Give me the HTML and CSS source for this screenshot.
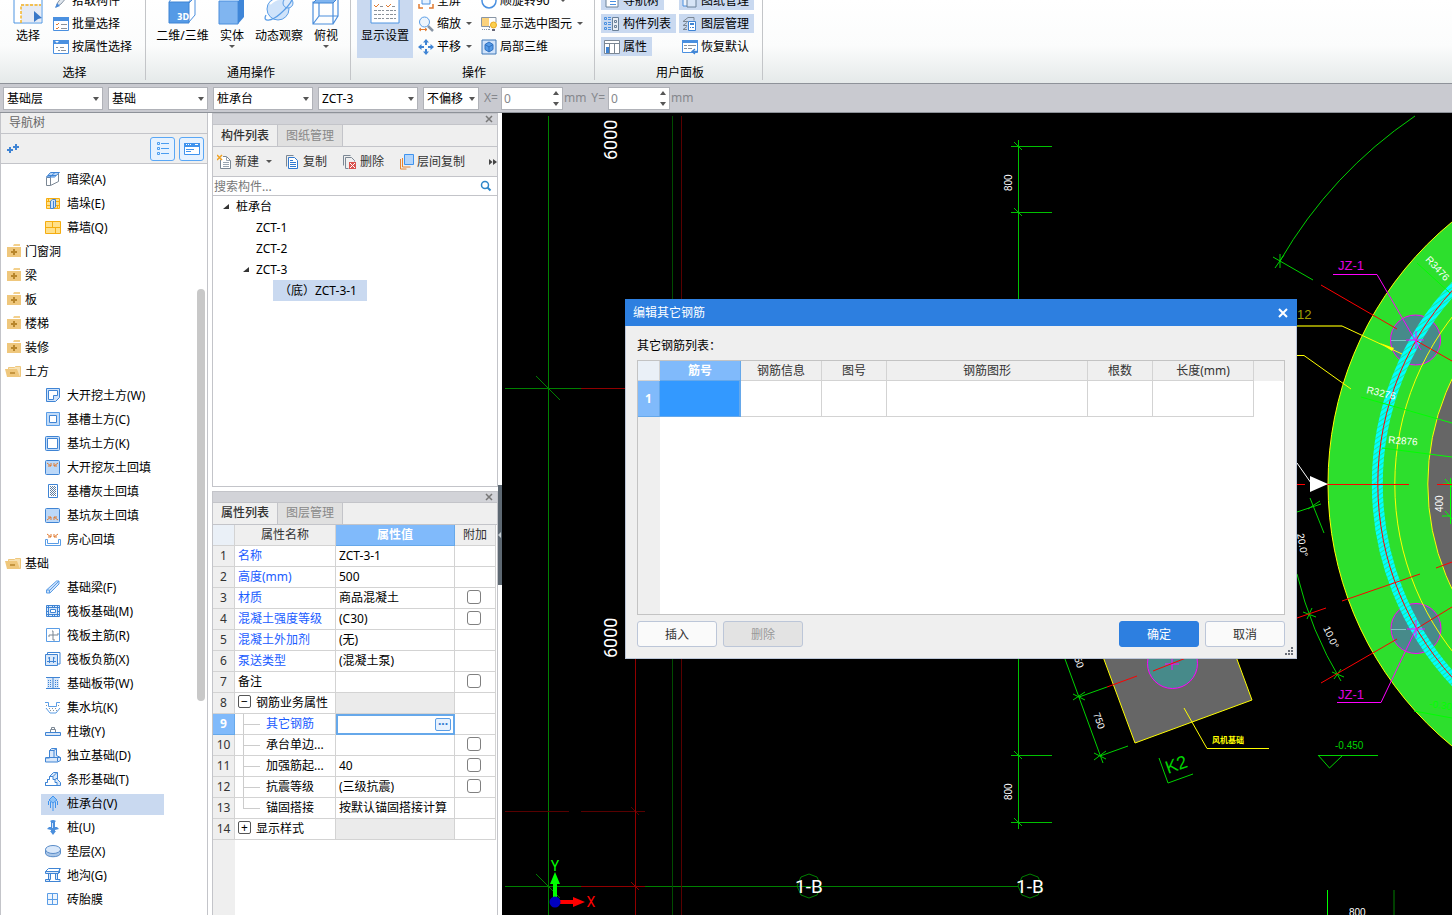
FILE: index.html
```html
<!DOCTYPE html>
<html lang="zh-CN">
<head>
<meta charset="utf-8">
<title>编辑其它钢筋</title>
<link rel="stylesheet" href="styles.css">
</head>
<body>
<header class="ribbon">
  <section class="group group-select">
    <div class="group-body">
      <button class="big"><svg class="big-icon" viewBox="0 0 30 32"><path d="M1 0V30H29V0" fill="#fff" stroke="#4f95e2"/><rect x="8" y="11" width="20" height="18" fill="#e6ebf5"/><path d="M8 30V12H28" fill="none" stroke="#f7b21c" stroke-width="1.4" stroke-dasharray="3 1.5"/><path d="M21 18l8 7-4 1-4 3z" fill="#3a78c8"/></svg><span>选择</span></button>
      <div class="stack">
        <button class="small"><svg viewBox="0 0 16 16"><path d="M3 14l2-5 6-7 3 2-6 7z" fill="#dfe6ee" stroke="#8895a5"/><path d="M2 15l2-5 3 3z" fill="#4a8ad8"/></svg>拾取构件</button>
        <button class="small"><svg viewBox="0 0 16 16"><path d="M.5 1.500h15v13H.5z" fill="#fff" stroke="#4a90e0"/><path d="M0 1h16v4H0z" fill="#4a90e0"/><path d="M3 8l1 1 2-2M3 12l1 1 2-2" fill="none" stroke="#e07a30"/><path d="M8 8.500h6M8 12.500h6" stroke="#8a929a"/></svg>批量选择</button>
        <button class="small"><svg viewBox="0 0 16 16"><path d="M.5 1.500h15v13H.5z" fill="#fff" stroke="#4a90e0"/><path d="M0 1h16v4H0z" fill="#4a90e0"/><path d="M2 2h4L4 4z" fill="#fff"/><path d="M3 8.500h2M7 8.500h4M5 11.500h2M8 11.500h5" stroke="#8a929a"/></svg>按属性选择</button>
      </div>
    </div>
    <h2 class="group-label">选择</h2>
  </section>
  <section class="group group-view">
    <div class="group-body">
      <button class="big big-wide"><svg class="big-icon" viewBox="0 0 30 32"><path d="M21 10l6-6v18l-6 7M27 4V0" fill="#fff" stroke="#4c8fdd"/><path d="M1 9h20v21H1z" fill="#559ae6" stroke="#3f84d4"/><path d="M1 9l5-7M21 9l5-7" stroke="#4c8fdd"/><text class="icon-3d" x="9" y="27">3D</text></svg><span>二维/三维</span></button>
      <button class="big"><svg class="big-icon" viewBox="0 0 30 32"><path d="M2 8h19v23H2z" fill="#80b5f0" stroke="#4a8edc"/><path d="M21 8l6-6v22l-6 7z" fill="#3f86d8"/><path d="M2 8l6-6h19l-6 6z" fill="#a8cdf5"/></svg><span>实体</span><i class="caret"></i></button>
      <button class="big big-mid"><svg class="big-icon" viewBox="0 0 30 32"><circle cx="14" cy="16" r="11" fill="#cfe3fa" stroke="#5a9de6"/><circle cx="24" cy="10" r="5" fill="#dceafb" stroke="#5a9de6"/><path d="M2 22c-4 8 6 6 14-1s14-14 13-20" fill="none" stroke="#5a9de6" stroke-width="1.300"/><path d="M6 11c3-3 6-5 10-5" fill="none" stroke="#fff" stroke-width="2"/></svg><span>动态观察</span></button>
      <button class="big"><svg class="big-icon" viewBox="0 0 30 32"><path d="M2 9h20v22H2zM8 4v19h19V3M2 31l6-8M22 31l5-8" fill="none" stroke="#4a8edc" stroke-width="1.200"/><path d="M2 10l6-6h20l-6 6z" fill="#80b5f0" stroke="#3f84d4"/></svg><span>俯视</span><i class="caret"></i></button>
    </div>
    <h2 class="group-label">通用操作</h2>
  </section>
  <section class="group group-op">
    <div class="group-body">
      <button class="big big-on"><svg class="big-icon" viewBox="0 0 30 32"><path d="M1 0V30H29V0" fill="#fff" stroke="#4f95e2"/><path d="M4 12l2 2 3-3M16 12l2 2 3-3" fill="none" stroke="#e07a30"/><path d="M10 13.500h4M22 13.500h4M4 17.500h10M16 17.500h10M4 21.500h10M16 21.500h10M4 25.500h10M16 25.500h10" stroke="#8a929a" stroke-dasharray="3 1"/></svg><span>显示设置</span></button>
      <div class="stack stack-zoom">
        <button class="small"><svg viewBox="0 0 16 16"><path d="M4 3h8v8H4z" fill="#e6f1fd" stroke="#4a90e0"/><path d="M1 11v4h4M11 15h4v-4" fill="none" stroke="#e07a30" stroke-width="1.500"/></svg>全屏</button>
        <button class="small"><svg viewBox="0 0 16 16"><circle cx="6.500" cy="6" r="5" fill="#edf5fd" stroke="#5a9de6"/><path d="M10 10l5 5" stroke="#8895a5" stroke-width="2.500"/><path d="M2 13.500h7M3 12l-2 1.500 2 1.500M7 12l2 1.500-2 1.500" fill="none" stroke="#e07a30"/></svg>缩放<i class="caret"></i></button>
        <button class="small"><svg viewBox="0 0 16 16"><path d="M8 0l3 3.500H9V6H7V3.500H5zM8 16l3-3.500H9V10H7v2.500H5zM0 8l3.500-3v2H6v2H3.500v2zM16 8l-3.500-3v2H10v2h2.500v2z" fill="#3f84d4"/></svg>平移<i class="caret"></i></button>
      </div>
      <div class="stack">
        <button class="small"><svg viewBox="0 0 16 16"><path d="M3 3a7 7 0 1 0 10 0" fill="none" stroke="#4a90e0" stroke-width="1.500"/></svg>顺旋转90°<i class="caret"></i></button>
        <button class="small"><svg viewBox="0 0 16 16"><path d="M.5 1.500H15v5M.5 1.500v9H9" fill="none" stroke="#8895a5"/><path d="M1 2h7v8H1z" fill="#fbd27c"/><path d="M8.500 11v4M1 13.500h7" fill="none" stroke="#8895a5" stroke-dasharray="1 1"/><circle cx="12.500" cy="9" r="3" fill="#fbd050" stroke="#e8a820"/><path d="M11 13h3v2h-3z" fill="#667"/></svg>显示选中图元<i class="caret"></i></button>
        <button class="small"><svg viewBox="0 0 16 16"><path d="M1 1h14v14H1z" fill="#cfe2fa" stroke="#3f78b8"/><path d="M8 3l4 2.500v5L8 13l-4-2.500v-5z" fill="#559ae6" stroke="#2f70c0"/><path d="M4 5.500L8 8l4-2.500M8 8v5" fill="none" stroke="#2f70c0"/></svg>局部三维</button>
      </div>
    </div>
    <h2 class="group-label">操作</h2>
  </section>
  <section class="group group-panel">
    <div class="group-body">
      <div class="stack stack-toggle">
        <button class="small on"><svg viewBox="0 0 16 16"><path d="M2 1h12v13H2z" fill="#fff" stroke="#6b8199"/><path d="M4 5.500h3M6 8.500h6M6 11.500h6" stroke="#4a90e0"/></svg>导航树</button>
        <button class="small on"><svg viewBox="0 0 16 16"><path d="M.5 1.500h2v2h-2zM.5 6.500h2v2h-2zM.5 11.500h2v2h-2z" fill="none" stroke="#4a90e0"/><path d="M4 1.500h3M4 3.500h3M4 6.500h3M4 8.500h3M4 11.500h3M4 13.500h3" stroke="#4a90e0"/><path d="M8.500 1.500h6v13h-6zM10.500 4.500h2v2h-2zM10.500 9.500h2v2h-2z" fill="#e9eef5" stroke="#6b8199"/></svg>构件列表</button>
        <button class="small on"><svg viewBox="0 0 16 16"><path d="M.5 1.500h15v13H.5z" fill="#fff" stroke="#7b8794"/><path d="M.5 4.500h15M5.500 4v10M10.500 4v10" stroke="#7b8794"/><path d="M2 8h3v6H2z" fill="#3f84d4"/></svg>属性</button>
      </div>
      <div class="stack stack-toggle">
        <button class="small on"><svg viewBox="0 0 16 16"><path d="M1 1h9v12H1z" fill="#eef4fb" stroke="#4a90e0"/><path d="M5 4h9v10H5z" fill="#d7e5f7" stroke="#6b8199"/></svg>图纸管理</button>
        <button class="small on"><svg viewBox="0 0 16 16"><path d="M1 5.500l5-4h6M1 5.500h5M1 9.500l4-3M1 9.500h4M1 13.500l4-3M1 13.500h4M12 1.500v3" fill="none" stroke="#7b8794"/><path d="M6.500 5.500h7v9h-7z" fill="#fff" stroke="#3f84d4"/><path d="M8 7h4v2H8zM8 11h1v1H8zM10 11h2v1h-2z" fill="#3f84d4"/></svg>图层管理</button>
        <button class="small"><svg viewBox="0 0 16 16"><path d="M.5 1.500h15v12H.5z" fill="#fff" stroke="#4a90e0"/><path d="M0 1h16v3H0z" fill="#4a90e0"/><path d="M2 6.500h3M6 6.500h8M2 9.500h3M6 9.500h4" stroke="#8a929a"/><path d="M16 12.500h-5M13 10l-3 2.500 3 2.500" fill="none" stroke="#3f84d4" stroke-width="1.300"/></svg>恢复默认</button>
      </div>
    </div>
    <h2 class="group-label">用户面板</h2>
  </section>
</header>

<div class="optionbar">
  <span class="combo"><select aria-label="楼层"><option>基础层</option></select></span>
  <span class="combo"><select aria-label="构件类别"><option>基础</option></select></span>
  <span class="combo"><select aria-label="构件类型"><option>桩承台</option></select></span>
  <span class="combo"><select aria-label="构件"><option>ZCT-3</option></select></span>
  <span class="combo combo-short"><select aria-label="偏移"><option>不偏移</option></select></span>
  <label class="offset">X=<span class="spin"><input type="text" value="0"></span>mm</label>
  <label class="offset">Y=<span class="spin"><input type="text" value="0"></span>mm</label>
</div>

<main class="workspace">
  <aside class="nav">
    <h2 class="nav-title">导航树</h2>
    <div class="nav-tools">
      <button class="plain" aria-label="展开"><svg class="plus-icon" viewBox="0 0 12 12"><path d="M3 4v6M0 7h6M9 1v6M6 4h6" stroke="#3f84d4" stroke-width="2"/></svg></button>
      <button class="view" aria-label="列表视图"><svg viewBox="0 0 16 16"><path d="M2.500 1.500h2v2h-2zM2.500 6.500h2v2h-2zM2.500 11.500h2v2h-2zM6 2.500h8M6 7.500h8M6 12.500h8" fill="none" stroke="#4a9df0"/></svg></button>
      <button class="view" aria-label="面板视图"><svg viewBox="0 0 16 16"><path d="M.5 2.500h15v11H.5z" fill="#fff" stroke="#3f93ee"/><path d="M0 2h16v4H0z" fill="#3f93ee"/><path d="M2 3.500h1M4 3.500h1M6 3.500h1M11 3.500h3" stroke="#fff"/><path d="M2 8.500h8M2 10.500h5" stroke="#3f93ee"/></svg></button>
    </div>
    <ul class="tree">
      <li class="leaf"><svg viewBox="0 0 16 16"><path d="M1.500 6.500h4v8h-4z" fill="#fff" stroke="#7b8794"/><path d="M1.500 6l4-4.500h9l-5 4.500z" fill="#b9d6f7" stroke="#3f84d4"/><path d="M5.500 14.500l8-4v-8" fill="none" stroke="#7b8794"/><path d="M5 6l5-4.500M3 4.500h8" stroke="#3f84d4"/></svg><button>暗梁(A)</button></li>
      <li class="leaf"><svg viewBox="0 0 16 16"><path d="M1.500 3.500h13v10h-13z" fill="#ffe08a" stroke="#f5ad10"/><path d="M1 6.500h14M1 10.500h14M3.500 3v3M12.500 10v3" stroke="#f5ad10"/><path d="M5.500 6l2-1.500h3v7.500l-2 1.500h-3z" fill="#cfe2fa" stroke="#3f84d4"/><path d="M8.500 6v7" stroke="#3f84d4"/></svg><button>墙垛(E)</button></li>
      <li class="leaf"><svg viewBox="0 0 16 16"><path d="M.5 2.500h15v12H.5zM.5 8.500h15M7.500 3v5M10.500 9v5" fill="#ffe08a" stroke="#f5ad10"/></svg><button>幕墙(Q)</button></li>
      <li class="folder"><svg viewBox="0 0 16 16"><path d="M9 1h6v2H8z" fill="#f3d08c"/><path d="M2 4h14v10H2z" fill="#efc77c"/><path d="M9 6v6M6 9h6" stroke="#b8862c" stroke-width="2"/></svg><button>门窗洞</button></li>
      <li class="folder"><svg viewBox="0 0 16 16"><path d="M9 1h6v2H8z" fill="#f3d08c"/><path d="M2 4h14v10H2z" fill="#efc77c"/><path d="M9 6v6M6 9h6" stroke="#b8862c" stroke-width="2"/></svg><button>梁</button></li>
      <li class="folder"><svg viewBox="0 0 16 16"><path d="M9 1h6v2H8z" fill="#f3d08c"/><path d="M2 4h14v10H2z" fill="#efc77c"/><path d="M9 6v6M6 9h6" stroke="#b8862c" stroke-width="2"/></svg><button>板</button></li>
      <li class="folder"><svg viewBox="0 0 16 16"><path d="M9 1h6v2H8z" fill="#f3d08c"/><path d="M2 4h14v10H2z" fill="#efc77c"/><path d="M9 6v6M6 9h6" stroke="#b8862c" stroke-width="2"/></svg><button>楼梯</button></li>
      <li class="folder"><svg viewBox="0 0 16 16"><path d="M9 1h6v2H8z" fill="#f3d08c"/><path d="M2 4h14v10H2z" fill="#efc77c"/><path d="M9 6v6M6 9h6" stroke="#b8862c" stroke-width="2"/></svg><button>装修</button></li>
      <li class="folder"><svg viewBox="0 0 16 16"><path d="M3.500 4.500h6l1-1h5v10h-12z" fill="#f8e2b4" stroke="#efc77c"/><path d="M0 6h12l3 8H2z" fill="#efc77c"/><path d="M5 10h5" stroke="#b8862c" stroke-width="1.500"/></svg><button>土方</button></li>
      <li class="leaf"><svg viewBox="0 0 16 16"><path d="M1.500 1.500h13v9l-4 4h-9z" fill="#cfe2fa" stroke="#3f84d4"/><path d="M3.500 3.500h9v5h-4v4h-5z" fill="#fff" stroke="#3f84d4"/></svg><button>大开挖土方(W)</button></li>
      <li class="leaf"><svg viewBox="0 0 16 16"><path d="M1.500 1.500h13v13h-13z" fill="#c3dcf8" stroke="#5a9de6"/><path d="M4.500 4.500h7v7h-7z" fill="#fff" stroke="#3f84d4"/></svg><button>基槽土方(C)</button></li>
      <li class="leaf"><svg viewBox="0 0 16 16"><rect x=".5" y="1.500" width="14" height="14" rx="1" fill="#c3dcf8" stroke="#3f84d4"/><path d="M2.500 3.500h10v10h-10z" fill="#fff" stroke="#3f84d4"/></svg><button>基坑土方(K)</button></li>
      <li class="leaf"><svg viewBox="0 0 16 16"><rect x=".5" y="1.500" width="14" height="14" rx="1" fill="#bcd8f8" stroke="#3f84d4"/><path d="M2 4l4 3M6 4v3H3M13 4L9 7M9 4v3h3" fill="none" stroke="#e07a30"/></svg><button>大开挖灰土回填</button></li>
      <li class="leaf"><svg viewBox="0 0 16 16"><path d="M3.500 1.500h9v13h-9z" fill="#fff" stroke="#3f84d4"/><path d="M5 3.500h6M5 5.500h6M5 7.500h6M5 9.500h6M5 11.500h6" stroke="#5f7da0" stroke-dasharray="1 1"/><path d="M6 4.500h5M6 6.500h5M6 8.500h5M6 10.500h5M6 12.500h5" stroke="#5f7da0" stroke-dasharray="1 1"/></svg><button>基槽灰土回填</button></li>
      <li class="leaf"><svg viewBox="0 0 16 16"><rect x=".5" y="1.500" width="14" height="14" rx="1" fill="#bcd8f8" stroke="#3f84d4"/><path d="M2 13l4-3M6 13v-3H3M13 13l-4-3M9 13v-3h3" fill="none" stroke="#e07a30"/></svg><button>基坑灰土回填</button></li>
      <li class="leaf"><svg viewBox="0 0 16 16"><path d="M.5 8.500h2v4h11v-4h2v6H.5z" fill="#fff" stroke="#5a9de6"/><path d="M2 3l4 3M6 3v3H3M13 3L9 6M9 3v3h3" fill="none" stroke="#e07a30"/></svg><button>房心回填</button></li>
      <li class="folder"><svg viewBox="0 0 16 16"><path d="M3.500 4.500h6l1-1h5v10h-12z" fill="#f8e2b4" stroke="#efc77c"/><path d="M0 6h12l3 8H2z" fill="#efc77c"/><path d="M5 10h5" stroke="#b8862c" stroke-width="1.500"/></svg><button>基础</button></li>
      <li class="leaf"><svg viewBox="0 0 16 16"><path d="M1.500 11l10-9h2.500v3L5 14H1.500z" fill="#cfe2fa" stroke="#5a9de6"/><path d="M1.500 11h3v3M5 11l9-9" fill="none" stroke="#5a9de6"/></svg><button>基础梁(F)</button></li>
      <li class="leaf"><svg viewBox="0 0 16 16"><path d="M1.500 2.500h13v11h-13z" fill="#d9e8fa" stroke="#3f84d4"/><path d="M3.500 3v11M12.500 3v11M1 4.500h14M1 11.500h14M7.500 2v3M9.500 2v3M7.500 11v3M9.500 11v3M1 8.500h2M13 8.500h2" stroke="#3f84d4"/><path d="M5.500 6.500h5v3h-5z" fill="#fff" stroke="#3f84d4"/></svg><button>筏板基础(M)</button></li>
      <li class="leaf"><svg viewBox="0 0 16 16"><path d="M1.500 1.500h13v13h-13z" fill="#fff" stroke="#5a9de6"/><path d="M4 10V8h9V6M7 4h1v9h2" fill="none" stroke="#7b8794"/></svg><button>筏板主筋(R)</button></li>
      <li class="leaf"><svg viewBox="0 0 16 16"><path d="M2.500 3V1.500h12.500V13h-2" fill="none" stroke="#3f84d4"/><path d="M.5 3.500h12v11H.5z" fill="#d9e8fa" stroke="#3f84d4"/><path d="M4.500 6v6M8.500 6v6M2 10.500h9M3 7h2M8 7h2" fill="none" stroke="#3f84d4"/></svg><button>筏板负筋(X)</button></li>
      <li class="leaf"><svg viewBox="0 0 16 16"><path d="M2 3h12v10H2z" fill="#d9e8fa"/><path d="M1 2.500h14M1 13.500h14M8 3v10" stroke="#3f84d4"/><path d="M3.500 5v8M5.500 5v8M10.500 5v8M12.500 5v8" stroke="#3f84d4" stroke-dasharray="1 1"/></svg><button>基础板带(W)</button></li>
      <li class="leaf"><svg viewBox="0 0 16 16"><path d="M0 3.500h3.500v4h8v-4H15M1 9l4 5h6l4-5" fill="none" stroke="#5a9de6"/><path d="M1 6.500h2M4 9.500h8M5 11.500h7M13 6.500h2" stroke="#8a929a" stroke-dasharray="1 2"/></svg><button>集水坑(K)</button></li>
      <li class="leaf"><svg viewBox="0 0 16 16"><path d="M.5 9.500h15v3H.5z" fill="#d9e8fa" stroke="#3f84d4"/><path d="M5.500 9V6.500h5V9M6.500 6V4.500h3V6" fill="none" stroke="#7b8794"/></svg><button>柱墩(Y)</button></li>
      <li class="leaf"><svg viewBox="0 0 16 16"><path d="M4.500 10V3.500l2-2h5v7l4 2v3l-3 1.500H.5v-4h4" fill="#d9e8fa" stroke="#3f84d4"/><path d="M4.500 3.500h4.500v7h3.500v4M9 3.500l2.500-2M.5 10.500H9M12.500 10.500h3" fill="none" stroke="#3f84d4"/></svg><button>独立基础(D)</button></li>
      <li class="leaf"><svg viewBox="0 0 16 16"><path d="M.5 14.500v-3h2v-3h2v-3l4-4h4v7l3 3v3z" fill="#d9e8fa" stroke="#3f84d4"/><path d="M.5 14.500v-3h2v-3h2v-3H8v3h2v3h2v3z" fill="#fff" stroke="#3f84d4"/><path d="M8 5.500l4-4M10 8.500l3-2" stroke="#3f84d4"/></svg><button>条形基础(T)</button></li>
      <li class="leaf"><div class="picked"><svg viewBox="0 0 16 16"><path d="M8 1l4 4-4 3-4-3z" fill="#8fc3f7" stroke="#3f93ee"/><path d="M3.500 6v4M5.500 7v6M8 8v8M10.500 7v6M12.500 6v4" stroke="#3f93ee"/></svg><button>桩承台(V)</button></div></li>
      <li class="leaf"><svg viewBox="0 0 16 16"><path d="M5 2q3-2 6 0l-1 1v5h2l2 2-4 1v1h1l-3 4-3-4h1v-1l-4-1 2-2h2V3z" fill="#4a8edc"/><path d="M7 4h1v5H7z" fill="#cfe2fa"/></svg><button>桩(U)</button></li>
      <li class="leaf"><svg viewBox="0 0 16 16"><path d="M.5 6v4c0 5 15 5 15 0V6" fill="#a9c6e8" stroke="#5a8cc8"/><ellipse cx="8" cy="6.500" rx="7.500" ry="4" fill="#d9e8fa" stroke="#5a8cc8"/></svg><button>垫层(X)</button></li>
      <li class="leaf"><svg viewBox="0 0 16 16"><path d="M.5 4.500l3-3h12l-2 3z" fill="#fff" stroke="#3f84d4"/><path d="M.5 4.500h13v2H.5zM3.500 6.500h2v6h-2zM10.500 6.500h2v6h-2zM.5 12.500h4v2h-4zM.5 14.500h15M11 12.500h4v2M14.500 2v4" fill="#d9e8fa" stroke="#3f84d4"/></svg><button>地沟(G)</button></li>
      <li class="leaf"><svg viewBox="0 0 16 16"><path d="M2.500 2.500h10v11h-10z" fill="#eef5fd" stroke="#5a9de6"/><path d="M7.500 2v12M3 8.500h9" stroke="#5a9de6"/></svg><button>砖胎膜</button></li>
    </ul>
    <div class="scroll-thumb"></div>
  </aside>

  <div class="panels">
    <section class="panel panel-list">
      <div class="panel-bar"><button aria-label="关闭构件列表"><svg viewBox="0 0 8 8"><path d="M1 1l6 6M7 1L1 7" stroke="#777" stroke-width="1.500"/></svg></button></div>
      <div class="tabs"><button class="tab tab-on">构件列表</button><button class="tab">图纸管理</button></div>
      <div class="tools">
        <button class="tool tool-new"><svg viewBox="0 0 16 16"><path d="M3.500 5.500v9h10v-8l-4-4H6" fill="#fff" stroke="#7b8794"/><path d="M9.500 2.500v4h4M6 8.500h6M6 10.500h6M6 12.500h6" fill="none" stroke="#9aa5b1"/><path d="M0 1l5 5M5 1L0 6" stroke="#f0a020" stroke-width="1.500"/></svg>新建<i class="caret"></i></button>
        <button class="tool"><svg viewBox="0 0 16 16"><path d="M1.500 12.500v-11h7" fill="none" stroke="#7b8794"/><path d="M3.500 3.500h6l3 3v8h-9z" fill="#fff" stroke="#2f78d0"/><path d="M5 6.500h3M5 8.500h6M5 10.500h6M5 12.500h6" stroke="#2f78d0"/></svg>复制</button>
        <button class="tool"><svg viewBox="0 0 16 16"><path d="M1.500 11.500v-10h7M3.500 14.500v-11h6l3 3v1M3.500 14.500h3" fill="none" stroke="#7b8794"/><path d="M7 8h7v7H7z" fill="#d9534f"/><path d="M8 9l5 5M13 9l-5 5" stroke="#fff"/></svg>删除</button>
        <button class="tool"><svg viewBox="0 0 16 16"><path d="M1.500 5v10h6M3.500 4v9h8" fill="none" stroke="#e88430"/><path d="M5.500.5h9v10h-9z" fill="#b3d5fb" stroke="#3f93ee"/></svg>层间复制</button>
        <button class="more" aria-label="更多"><svg viewBox="0 0 8 8"><path d="M0 1l3.500 3L0 7zM4 1l4 3-4 3z" fill="#444"/></svg></button>
      </div>
      <div class="search"><input type="text" placeholder="搜索构件..." aria-label="搜索构件"><svg viewBox="0 0 12 12"><circle cx="5" cy="5" r="3.500" fill="none" stroke="#2f86c8" stroke-width="1.500"/><path d="M7.500 7.500l3 3" stroke="#2f86c8" stroke-width="2"/></svg></div>
      <ul class="parts">
        <li class="lv0"><svg viewBox="0 0 7 7"><path d="M6 1v5H0z" fill="#333"/></svg>桩承台</li>
        <li class="lv1">ZCT-1</li>
        <li class="lv1">ZCT-2</li>
        <li class="lv1 open"><svg viewBox="0 0 7 7"><path d="M6 1v5H0z" fill="#333"/></svg>ZCT-3</li>
        <li class="lv2"><button>（底）ZCT-3-1</button></li>
      </ul>
    </section>

    <section class="panel panel-props">
      <div class="panel-bar"><button aria-label="关闭属性列表"><svg viewBox="0 0 8 8"><path d="M1 1l6 6M7 1L1 7" stroke="#777" stroke-width="1.500"/></svg></button></div>
      <div class="tabs"><button class="tab tab-on">属性列表</button><button class="tab">图层管理</button></div>
      <div class="props-wrap">
      <table class="props">
        <colgroup><col class="c-no"><col class="c-name"><col class="c-val"><col class="c-add"></colgroup>
        <thead><tr><th class="corner"></th><th>属性名称</th><th class="hot">属性值</th><th>附加</th></tr></thead>
        <tbody>
          <tr><th>1</th><td class="blue">名称</td><td>ZCT-3-1</td><td></td></tr>
          <tr><th>2</th><td class="blue">高度(mm)</td><td>500</td><td></td></tr>
          <tr><th>3</th><td class="blue">材质</td><td>商品混凝土</td><td class="chk"><input type="checkbox" aria-label="附加材质"></td></tr>
          <tr><th>4</th><td class="blue">混凝土强度等级</td><td>(C30)</td><td class="chk"><input type="checkbox" aria-label="附加混凝土强度等级"></td></tr>
          <tr><th>5</th><td class="blue">混凝土外加剂</td><td>(无)</td><td></td></tr>
          <tr><th>6</th><td class="blue">泵送类型</td><td>(混凝土泵)</td><td></td></tr>
          <tr><th>7</th><td>备注</td><td></td><td class="chk"><input type="checkbox" aria-label="附加备注"></td></tr>
          <tr><th>8</th><td><button class="fold">−</button>钢筋业务属性</td><td class="na"></td><td></td></tr>
          <tr><th class="hot">9</th><td class="blue sub">其它钢筋</td><td class="editing"><div class="edit"><input type="text" aria-label="其它钢筋"><button aria-label="编辑其它钢筋">···</button></div></td><td></td></tr>
          <tr><th>10</th><td class="sub">承台单边...</td><td></td><td class="chk"><input type="checkbox" aria-label="附加承台单边"></td></tr>
          <tr><th>11</th><td class="sub">加强筋起...</td><td>40</td><td class="chk"><input type="checkbox" aria-label="附加加强筋"></td></tr>
          <tr><th>12</th><td class="sub">抗震等级</td><td>(三级抗震)</td><td class="chk"><input type="checkbox" aria-label="附加抗震等级"></td></tr>
          <tr><th>13</th><td class="sub sub-last">锚固搭接</td><td>按默认锚固搭接计算</td><td></td></tr>
          <tr><th>14</th><td><button class="fold">+</button>显示样式</td><td class="na"></td><td></td></tr>
        </tbody>
      </table>
      </div>
    </section>
  </div>

  <div class="splitter"><button class="collapse" aria-label="收起面板"></button></div>

  <div class="canvas">
    <svg class="drawing" viewBox="502 113 950 802" preserveAspectRatio="xMinYMin slice">
      <defs>
        <pattern id="hatch" width="4" height="4" patternUnits="userSpaceOnUse" patternTransform="rotate(-35)"><rect width="4" height="4" fill="#00ffff"/><path d="M0 .5h4" stroke="#20e0a0"/></pattern>
      </defs>
      <g class="ln">
        <path class="g-dim" d="M548.500 116V915M505 388.500H581M505 886.500H581M645 886.500H1018M536 376L560 400M536 874L560 898"/>
        <path class="g-dark" d="M672.500 116V915"/>
        <path class="r-dark" d="M681.500 116V915M505 811.500H569M581 811.500H645M631 807l8 8"/>
        <path class="r-dim" d="M635.500 388V915M581 388.500H645M581 886.500H645M631 882l8 8"/>
        <path class="g-dim" d="M809 874l8 3 4 9-4 9-8 3-8-3-4-9 4-9zM1030 874l8 3 4 9-4 9-8 3-8-3-4-9 4-9z"/>
        <path class="g-mid" d="M1018.500 140V829M1011 146.500H1052M1011 212.500H1052M1011 755.500H1052M1011 822.500H1052M1014 142l8 8M1014 208l8 8M1014 751l8 8M1014 818l8 8"/>
      </g>
      <text class="cad-wide" transform="translate(617 160) rotate(-90)">6000</text>
      <text class="cad-wide" transform="translate(617 658) rotate(-90)">6000</text>
      <text class="cad t10" transform="translate(1012 191) rotate(-90)">800</text>
      <text class="cad t10" transform="translate(1012 800) rotate(-90)">800</text>
      <text class="tag" x="809" y="893">1-B</text>
      <text class="tag" x="1030" y="893">1-B</text>
      <path d="M555 900V883" stroke="#0f0" stroke-width="4"/><path d="M555 872l5 12h-10z" fill="#0f0"/>
      <path d="M557 902H573" stroke="#f00" stroke-width="4"/><path d="M585 902l-12 5v-10z" fill="#f00"/>
      <circle cx="555" cy="902" r="5.500" fill="#0000c0"/>
      <text class="axis axis-y" x="555" y="871">Y</text>
      <text class="axis axis-x" x="591" y="907">X</text>

      <g class="ln">
        <circle cx="1666.800" cy="484" r="338.800" fill="#2ddf2d" class="y"/>
        <circle cx="1666.800" cy="484" r="239" fill="#666" class="y"/>
        <circle cx="1415.500" cy="340" r="25" class="pile"/>
        <circle cx="1416" cy="628.500" r="25" class="pile"/>
        <circle cx="1666.800" cy="484" r="289.500" class="band"/>
        <circle cx="1666.800" cy="484" r="289" class="r"/>
        <circle cx="1666.800" cy="484" r="272" class="y"/>
        <path class="pale" d="M1391 340.500H1406M1391 629.500H1406"/>
        <path class="g" d="M1415 116A446 446 0 0 0 1280 261M1273 257L1313 280M1275 268L1284 255M1280 254v14"/>
        <path class="r" d="M1321 285L1397 329M1415 340L1452 361"/>
        <path class="m" d="M1333 274.500H1377L1415 340L1421 350M1406 340h18M1416 331v18"/>
        <path class="y" d="M1342 326L1402 354M1297 355.500H1304L1351 389"/>
        <path class="olive" d="M1297 326H1342"/><path d="M1380 343l14 5-2 3z" fill="#ff0"/>
        <path class="gb" d="M1417 263L1450 293M1361 397L1452 423M1382 448L1452 457M1450.500 478V524M1443 484h9M1445 479l7 8M1442 516h9M1445 511l7 8"/>
        <path class="r" d="M1297 484.500H1305M1310 484.500H1409M1437 484.500H1452"/>
        <path d="M1310 476v16l18-8z" fill="#fff"/><path class="w" d="M1297 463L1311 483"/>
        <path class="g" d="M1297 512L1321 504M1310 498L1324 533M1308 509l12-8M1297 574A380.500 380.500 0 0 0 1341 681M1303 612l13 5M1312 608l-5 11M1332 672l12 5M1341 669l-7 10"/>
        <path class="r" d="M1297 618L1326 608M1342 601L1420 574M1436 568L1452 562M1321 683L1397 639M1416 629L1452 607"/>
        <path class="m" d="M1416 629L1381 702.500H1337M1407 629h18M1416 620v18"/>
        <path class="gb" d="M1414 711L1452 718"/>
        <path class="g" d="M1318 755.500H1378M1318 755L1329.500 768L1343 755M1159 758L1168 783L1193 774"/>
        <path class="gb" d="M1327.500 890V915"/><path class="g-dim" d="M1394 890V915"/>
        <path d="M1089 619L1135 743L1252 700L1221 616z" fill="#666" class="y"/>
        <circle cx="1172.500" cy="663.500" r="25" class="pile"/>
        <path class="m" d="M1165 664h14M1172 656v14"/>
        <path class="g" d="M1065 659L1103 763M1079 697L1107 687M1100 756L1128 746M1073 694l12 6M1085 692l-12 8M1094 753l12 6M1106 751l-12 9"/>
        <path class="r" d="M1107 687L1137 676M1153 671L1186 658"/>
        <path class="y" d="M1184 708L1207 748.500H1269"/>
      </g>
      <text class="cad t13 mg" x="1338" y="270">JZ-1</text>
      <text class="cad t13 mg" x="1338" y="699">JZ-1</text>
      <text class="cad t13 ol" x="1297" y="319">12</text>
      <text class="cad t10" transform="translate(1425 260) rotate(47)">R3476</text>
      <text class="cad t10" transform="translate(1366 393) rotate(13)">R3276</text>
      <text class="cad t10" transform="translate(1388 443) rotate(5)">R2876</text>
      <text class="cad t10" transform="translate(1443 512) rotate(-90)">400</text>
      <text class="cad t10" transform="translate(1297 534) rotate(80)">20.0°</text>
      <text class="cad t10" transform="translate(1323 628) rotate(65)">10.0°</text>
      <text class="cad t10" transform="translate(1072 653) rotate(70)">750</text>
      <text class="cad t10" transform="translate(1093 714) rotate(70)">750</text>
      <text class="cad t10 gr" x="1335" y="749">-0.450</text>
      <text class="cad t10 gb-t" transform="translate(1429 707) rotate(8)">-0.300</text>
      <text class="cad t10" x="1349" y="916">800</text>
      <text class="cad t18 gr" transform="translate(1168 774) rotate(-20)">K2</text>
      <text class="note" x="1212" y="743">风机基础</text>
    </svg>
  </div>
</main>

<section class="dialog" role="dialog" aria-labelledby="dlg-title">
  <header class="dialog-head"><h1 id="dlg-title">编辑其它钢筋</h1><button aria-label="关闭"><svg viewBox="0 0 10 10"><path d="M1 1l8 8M9 1L1 9" stroke="#fff" stroke-width="2"/></svg></button></header>
  <div class="dialog-body">
    <p class="caption">其它钢筋列表：</p>
    <div class="grid-wrap">
      <table class="bars">
        <colgroup><col class="b-no"><col class="b-m"><col class="b-m"><col class="b-s"><col class="b-l"><col class="b-s"><col class="b-x"></colgroup>
        <thead><tr><th class="corner"></th><th class="hot">筋号</th><th>钢筋信息</th><th>图号</th><th>钢筋图形</th><th>根数</th><th>长度(mm)</th></tr></thead>
        <tbody><tr><th class="hot">1</th><td class="cell-on"></td><td></td><td></td><td></td><td></td><td></td></tr></tbody>
      </table>
    </div>
    <footer class="dialog-foot">
      <button class="btn">插入</button><button class="btn" disabled>删除</button><span class="fill"></span><button class="btn btn-main">确定</button><button class="btn">取消</button>
    </footer>
  </div>
  <svg class="grip" viewBox="0 0 9 9"><path d="M6 0h2v2H6zM3 3h2v2H3zM6 3h2v2H6zM0 6h2v2H0zM3 6h2v2H3zM6 6h2v2H6z" fill="#6b6f78"/></svg>
</section>
</body>
</html>
```

FILE: styles.css
```css
* { box-sizing: border-box; }
html, body { height: 100%; }
body {
  margin: 0;
  display: flex;
  flex-direction: column;
  overflow: hidden;
  position: relative;
  background: #fff;
  color: #000;
  font: 12px/18px "Noto Sans", "Noto Sans CJK SC", sans-serif;
}
button, input, select { font: inherit; color: inherit; }
button { border: 0; padding: 0; background: none; white-space: nowrap; }
h1, h2, p, ul { margin: 0; padding: 0; font: inherit; list-style: none; }
svg { display: block; flex: none; }
input { min-width: 0; }

.caret {
  width: 0;
  border: 3px solid transparent;
  border-top-color: #555;
  border-bottom: 0;
}

/* ribbon */
.ribbon {
  flex: none;
  height: 84px;
  display: flex;
  align-items: flex-end;
  overflow: hidden;
  background: linear-gradient(#fff, #fbfcfc 55%, #e5e9e9);
  border-bottom: 1px solid #8e9299;
}
.group { flex: none; position: relative; }
.group::after {
  content: "";
  position: absolute;
  right: 0;
  top: 0;
  bottom: 3px;
  width: 1px;
  background: #c3c5c8;
}
.group-select { width: 146px; padding-left: 3px; }
.group-view { width: 205px; padding-left: 9px; }
.group-op { width: 244px; padding-left: 6px; }
.group-panel { width: 168px; padding-left: 6px; }
.group-body { display: flex; height: 69px; }
.group-label { height: 25px; padding: 6px 4px 0 0; text-align: center; }
.group-select .group-label { padding-right: 0; }
.big {
  display: flex;
  flex-direction: column;
  align-items: center;
  width: 44px;
  padding-top: 4px;
}
.group-select .big { width: 50px; }
.group-body .big-wide { width: 55px; }
.group-body .big-mid { width: 50px; }
.group-body .big-on { width: 56px; background: #c9d9f0; }
.big-icon { width: 30px; height: 32px; }
.big span { margin-top: 2px; }
.icon-3d { font: bold 8px "DejaVu Sans", sans-serif; fill: #fff; }
.stack { display: flex; flex-direction: column; align-items: flex-start; }
.stack-zoom { width: 63px; padding-left: 5px; }
.stack-zoom + .stack { padding-left: 5px; }
.small {
  display: flex;
  align-items: center;
  gap: 3px;
  height: 19px;
  margin: 2px 0;
}
.small svg { width: 16px; height: 16px; }
.small .caret { margin-left: 2px; }
.stack-toggle { width: 78px; }
.stack-toggle .small { padding: 0 5px 0 3px; }
.on { background: #c9d9f0; }

/* option bar */
.optionbar {
  flex: none;
  height: 29px;
  display: flex;
  align-items: center;
  gap: 5px;
  padding: 0 3px;
  background: #c9cad0;
  border-bottom: 1px solid #8e9299;
}
.combo { position: relative; width: 100px; }
.combo-short { width: 56px; }
.combo select {
  display: block;
  width: 100%;
  height: 23px;
  padding: 2px 3px 0;
  appearance: none;
  background: #fff;
  border: 1px solid #b0b2b8;
  border-radius: 0;
}
.combo::after {
  content: "";
  position: absolute;
  right: 4px;
  top: 10px;
  border: 3px solid transparent;
  border-top: 4px solid #555;
  border-bottom: 0;
}
.offset { display: flex; align-items: center; color: #85878c; }
.spin { position: relative; width: 62px; margin: 0 1px 0 3px; }
.spin input {
  display: block;
  width: 100%;
  height: 23px;
  padding: 0 2px;
  background: #fff;
  border: 1px solid #b0b2b8;
}
.spin::before, .spin::after {
  content: "";
  position: absolute;
  right: 4px;
  border: 3px solid transparent;
}
.spin::before { top: 4px; border-top: 0; border-bottom: 4px solid #555; }
.spin::after { bottom: 4px; border-bottom: 0; border-top: 4px solid #555; }

/* workspace */
.workspace { flex: 1; min-height: 0; display: flex; }
.nav {
  flex: none;
  width: 208px;
  margin-right: 4px;
  position: relative;
  display: flex;
  flex-direction: column;
  border: solid #c3c4c9;
  border-width: 0 1px;
}
.nav-title {
  flex: none;
  height: 21px;
  padding-left: 8px;
  line-height: 20px;
  background: #efefef;
  border-bottom: 1px solid #c3c4c9;
  color: #666;
}
.nav-tools {
  flex: none;
  height: 30px;
  display: flex;
  align-items: center;
  gap: 4px;
  padding: 0 3px 0 6px;
  background: #efefef;
  border-bottom: 1px solid #c3c4c9;
}
.plain { margin-right: auto; }
.plus-icon { width: 12px; height: 12px; }
.view {
  width: 25px;
  height: 24px;
  display: grid;
  place-items: center;
  background: #e6f2ff;
  border: 1px solid #5aa7f5;
  border-radius: 3px;
}
.view svg { width: 16px; height: 16px; }
.tree { flex: 1; min-height: 0; overflow: hidden; padding-top: 4px; }
.tree li { height: 24px; display: flex; align-items: center; gap: 6px; }
.tree svg { width: 16px; height: 16px; margin-bottom: 2px; }
.leaf { padding-left: 44px; }
.tree .folder { padding-left: 4px; gap: 4px; }
.picked {
  display: flex;
  align-items: center;
  gap: 6px;
  width: 123px;
  height: 21px;
  margin-left: -4px;
  padding-left: 4px;
  background: #c9d9f0;
}
.scroll-thumb {
  position: absolute;
  right: 2px;
  top: 22%;
  width: 8px;
  height: 412px;
  border-radius: 4px;
  background: #c8c8c8;
}

.panels { flex: none; width: 286px; display: flex; flex-direction: column; gap: 4px; }
.panel {
  min-height: 0;
  display: flex;
  flex-direction: column;
  overflow: hidden;
  border: 1px solid #c3c4c9;
}
.panel-list { flex: 373 1 0; }
.panel-props { flex: 425 1 0; border-bottom: 0; }
.panel-bar {
  flex: none;
  height: 11px;
  display: flex;
  align-items: center;
  justify-content: flex-end;
  padding-right: 4px;
  background: #d2d3d8;
  border-bottom: 1px solid #c3c4c9;
}
.panel-bar svg { width: 8px; height: 8px; }
.tabs {
  flex: none;
  height: 22px;
  display: flex;
  background: #efefef;
  border-bottom: 1px solid #c3c4c9;
}
.tab { width: 65px; border-right: 1px solid #c3c4c9; background: #e0e0e0; color: #888; }
.tab-on { background: #efefef; color: #333; font-weight: 500; }
.tools {
  flex: none;
  height: 30px;
  display: flex;
  align-items: center;
  gap: 15px;
  padding: 0 0 0 4px;
  background: #efefef;
  border-bottom: 1px solid #c3c4c9;
  color: #333;
}
.tool { display: flex; align-items: center; gap: 2px; }
.tool-new { margin-right: -2px; }
.tool .caret { margin-left: 5px; }
.tool svg { width: 16px; height: 16px; }
.more { margin-left: auto; }
.more svg { width: 8px; height: 8px; }
.search {
  flex: none;
  height: 19px;
  display: flex;
  align-items: center;
  padding-right: 5px;
  border-bottom: 1px solid #c3c4c9;
}
.search input { flex: 1; height: 18px; border: 0; padding: 1px 1px 0; outline: 0; }
.search input::placeholder { color: #777; }
.search svg { width: 12px; height: 12px; }
.parts li { height: 21px; display: flex; align-items: center; }
.parts svg { width: 7px; height: 7px; margin-right: 6px; }
.lv0 { padding-left: 10px; }
.lv1 { padding-left: 43px; }
.parts .open { padding-left: 30px; }
.lv2 { padding-left: 60px; }
.lv2 button { width: 94px; height: 21px; padding-right: 4px; background: #c9d9f0; }

/* tables */
table { border-collapse: separate; border-spacing: 0; table-layout: fixed; }
th { font-weight: 400; color: #333; background: #efefef; }
th, td { padding: 0; border: solid #d3d3d3; border-width: 0 1px 1px 0; white-space: nowrap; }
.corner { background: #eaf0f7; }
.props-wrap { flex: 1; background: linear-gradient(90deg, #efefef 22px, #fff 22px); }
.props { width: 283px; }
.props th, .props td { height: 21px; line-height: 18px; }
.props td { padding-left: 3px; overflow: hidden; }
.c-no { width: 22px; }
.c-name { width: 101px; }
.c-val { width: 119px; }
.c-add { width: 41px; }
th.hot { background: #80bafb; border-color: #66a8ea; color: #fff; font-weight: 700; }
.props .blue { color: #1a5cff; }
.props .na { background: #ebebeb; }
.props .chk { padding: 0 2px 2px 0; }
.chk input {
  display: block;
  width: 14px;
  height: 14px;
  margin: 0 auto;
  appearance: none;
  background: #fff;
  border: 1px solid #808080;
  border-radius: 3px;
}
.fold {
  width: 13px;
  height: 13px;
  margin-right: 5px;
  border: 1px solid #555;
  border-radius: 2px;
  background: #fff;
  line-height: 11px;
  vertical-align: 1px;
}
.props .sub { position: relative; padding-left: 31px; }
.sub::before {
  content: "";
  position: absolute;
  left: 8px;
  top: 0;
  width: 16px;
  height: 10px;
  border: solid #ccc;
  border-width: 0 0 1px 1px;
}
.sub::after {
  content: "";
  position: absolute;
  left: 8px;
  top: 10px;
  bottom: -1px;
  border-left: 1px solid #ccc;
}
.sub-last::after { display: none; }
.props .editing { padding: 0; border: 0; }
.edit {
  display: flex;
  align-items: center;
  height: 21px;
  padding-right: 2px;
  border: 2px solid #66a8ea;
}
.edit input { flex: 1; height: 16px; border: 0; padding: 0 2px; outline: 0; }
.edit button {
  width: 16px;
  height: 13px;
  border: 1px solid #5a9de6;
  border-radius: 2px;
  background: #e6f2ff;
  color: #2f78d0;
  font-weight: 700;
  line-height: 10px;
}

.splitter {
  flex: none;
  width: 4px;
  display: flex;
  flex-direction: column;
  justify-content: center;
  background: #fff;
  padding-top: 42px;
}
.collapse { height: 100px; background: #5d6872; display: flex; align-items: center; }
.collapse::before { content: ""; border: 3px solid transparent; border-right-color: #c5ccd2; border-left: 0; }

/* drawing */
.canvas { flex: 1; min-width: 0; background: #000; overflow: hidden; }
.drawing { width: 100%; height: 100%; }
.ln { stroke-width: 1; }
.ln path:not([fill]) { fill: none; }
.g { stroke: #00d200; }
.gb { stroke: #00ff00; }
.g-mid { stroke: #00c000; }
.g-dim { stroke: #008000; }
.g-dark { stroke: #004c00; }
.r { stroke: #f00; fill: none; }
.r-dim { stroke: #900000; }
.r-dark { stroke: #580000; }
.y { stroke: #ff0; }
circle.y:not([fill]) { fill: none; }
.m { stroke: #f0f; }
.w { stroke: #fff; }
.pale { stroke: #7fc4c0; }
.olive { stroke: #909000; stroke-width: 2; }
.band { fill: none; stroke: url(#hatch); stroke-width: 11; }
.pile { fill: #478a8a; stroke: #f0f; }
.cad { font-family: "Liberation Sans", sans-serif; fill: #fff; }
.cad-wide { font: 18px Roboto, sans-serif; fill: #fff; }
.t10 { font-size: 10px; }
.t13 { font-size: 13px; }
.t18 { font-size: 18px; }
.mg { fill: #e000e0; }
.ol { fill: #a0a000; }
.gr { fill: #00d200; }
.gb-t { fill: #00ff00; }
.tag { font: 19px Roboto, sans-serif; fill: #fff; text-anchor: middle; }
.axis { font: 14px Roboto, sans-serif; text-anchor: middle; }
.axis-y { fill: #0f0; }
.axis-x { fill: #f00; }
.note { font: bold 8px "Noto Sans CJK SC", sans-serif; fill: #ff0; }

/* dialog */
.dialog {
  position: absolute;
  left: 625px;
  top: 299px;
  width: 672px;
  background: #efefef;
}
.dialog-head {
  display: flex;
  align-items: center;
  justify-content: space-between;
  height: 27px;
  padding: 0 9px 0 8px;
  background: #2d7fe0;
  color: #fff;
}
.dialog-head svg { width: 10px; height: 10px; }
.dialog-body {
  padding: 11px 11px 10px;
  border: 1px solid #bcc6d8;
  border-top: 0;
}
.caption { height: 23px; }
.grid-wrap {
  height: 255px;
  border: 1px solid #c3c3c3;
  background: linear-gradient(#efefef 20px, transparent 20px), linear-gradient(90deg, #efefef 22px, #fff 22px);
}
.bars { width: 616px; }
.bars thead th { height: 20px; padding-top: 1px; line-height: 18px; }
.bars tbody th, .bars tbody td { height: 36px; }
.bars .cell-on { background: #3399ff; border-color: #66a8ea; border-right-width: 2px; }
.b-no { width: 22px; }
.b-m { width: 81px; }
.b-s { width: 65px; }
.b-l { width: 201px; }
.b-x { width: 101px; }
.dialog-foot { display: flex; gap: 6px; padding: 6px 0 1px; }
.fill { flex: 1; }
.btn {
  width: 80px;
  height: 26px;
  padding-top: 1px;
  border: 1px solid #bcc6d8;
  border-radius: 3px;
  background: #fafafa;
  color: #333;
}
.btn:disabled { background: #e3e3e3; color: #999; }
.btn-main { background: #2d7fe0; border-color: #2d7fe0; color: #fff; }
.grip { position: absolute; right: 3px; bottom: 3px; width: 9px; height: 9px; }
```
